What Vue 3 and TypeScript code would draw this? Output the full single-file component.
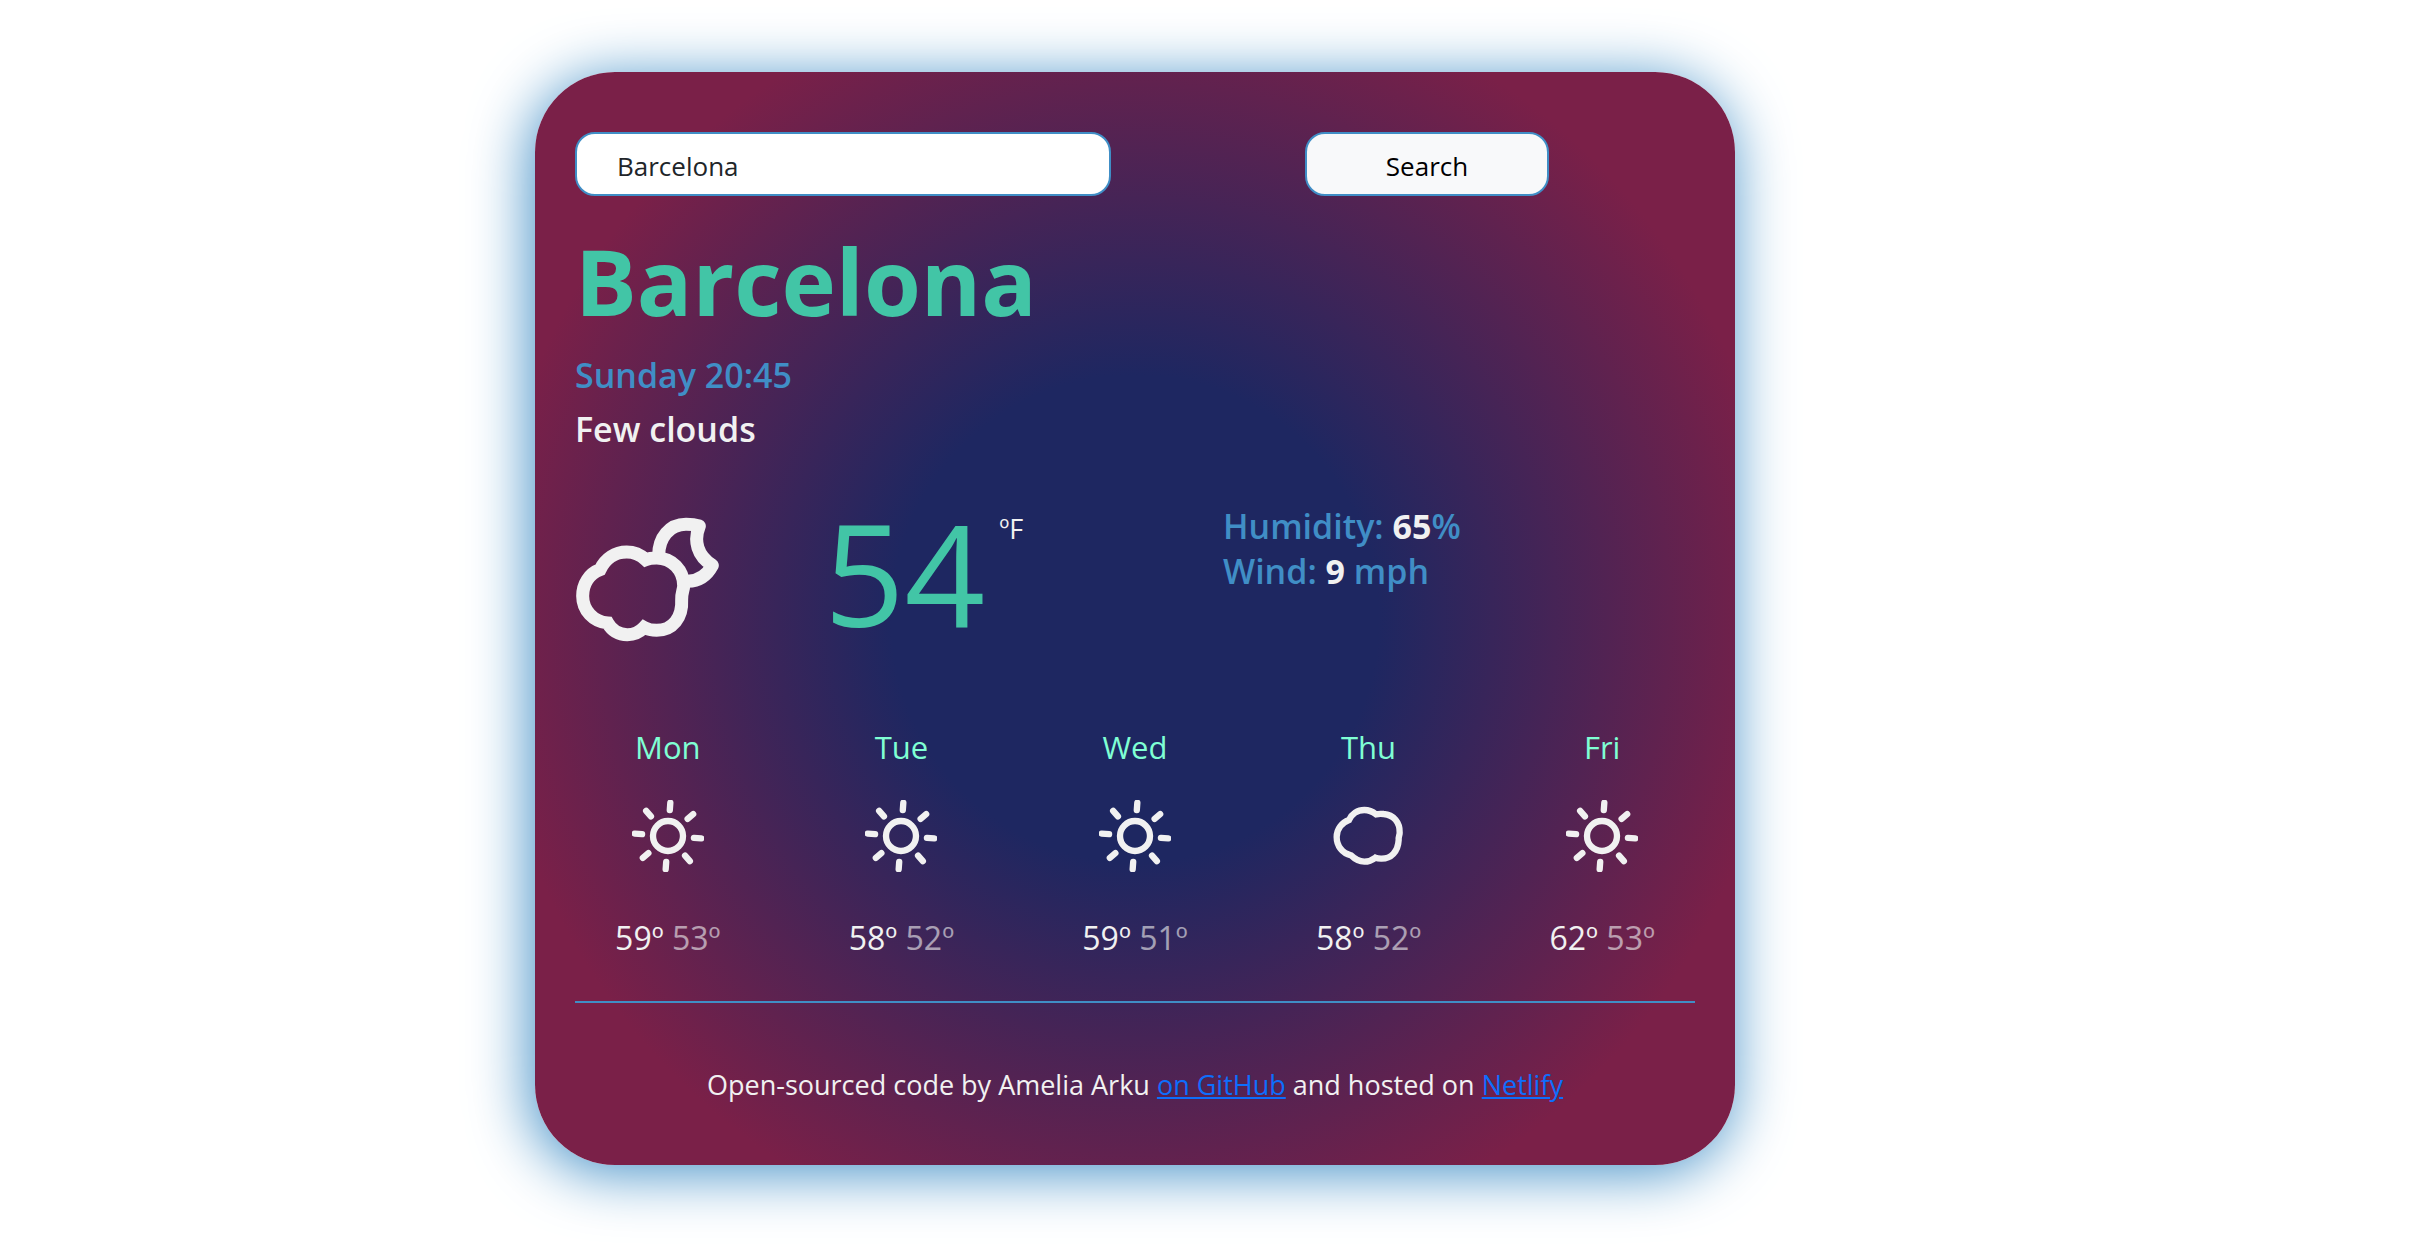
<script setup lang="ts">
import { ref } from 'vue'

interface Day {
  name: string
  icon: 'sun' | 'cloud'
  high: number
  low: number
}

const query = ref('Barcelona')
const city = ref('Barcelona')

const days: Day[] = [
  { name: 'Mon', icon: 'sun', high: 59, low: 53 },
  { name: 'Tue', icon: 'sun', high: 58, low: 52 },
  { name: 'Wed', icon: 'sun', high: 59, low: 51 },
  { name: 'Thu', icon: 'cloud', high: 58, low: 52 },
  { name: 'Fri', icon: 'sun', high: 62, low: 53 },
]

const rays = [0, 1, 2, 3, 4, 5, 6, 7].map((n) => 4 + n * 45)

function search() {
  const name = query.value.trim()
  if (name) city.value = name
}
</script>

<template>
  <main class="card">
    <form class="search" @submit.prevent="search">
      <input v-model="query" class="search-input" type="text" aria-label="City" />
      <button class="search-button" type="submit">Search</button>
    </form>

    <h1 class="city">{{ city }}</h1>
    <p class="summary when">Sunday 20:45</p>
    <p class="summary">Few clouds</p>

    <section class="current">
      <svg class="current-icon" viewBox="45 75 435 381" aria-hidden="true">
        <g fill="none" stroke="currentColor" stroke-width="39">
          <path stroke-linejoin="round" d="M296 194C296 140 328 100 378 100C393 100 405 101 418 105C400 150 412 195 457 223C440 255 415 270 383 271" />
          <path d="M120 236C136 202 166 183 200 183C222 183 242 192 257 206C267 202 278 201 290 201C336 201 371 238 371 284C371 296 364 306 365 326C368 380 338 418 290 418C276 418 263 415 252 409C238 424 220 431 202 431C178 431 156 419 143 396C100 392 68 358 68 315C68 278 88 248 120 236Z" />
        </g>
      </svg>
      <div class="temperature">
        <span class="degrees">54</span>
        <span class="unit">ºF</span>
      </div>
      <ul class="details">
        <li>Humidity: <strong>65</strong>%</li>
        <li>Wind: <strong>9</strong> mph</li>
      </ul>
    </section>

    <ul class="forecast">
      <li v-for="day in days" :key="day.name" class="day">
        <span class="day-name">{{ day.name }}</span>
        <svg v-if="day.icon === 'sun'" class="day-icon" viewBox="-108 -108 216 216" aria-hidden="true">
          <g fill="none" stroke="currentColor" stroke-width="19" stroke-linecap="round">
            <circle r="45" />
            <path v-for="angle in rays" :key="angle" d="M0 -100V-78" :transform="`rotate(${angle})`" />
          </g>
        </svg>
        <svg v-else class="day-icon" viewBox="818 270 216 216" aria-hidden="true">
          <path
            fill="none"
            stroke="currentColor"
            stroke-width="19"
            d="M866 330C874 312 892 300 912 300C924 300 936 304 947 313C955 311 962 311 970 312C1000 314 1019 338 1018 368C1018 376 1014 380 1015 390C1013 425 992 447 962 446C955 446 950 445 945 443C936 450 925 455 912 455C895 455 882 446 872 436C846 430 829 408 829 381C829 356 845 338 866 330Z"
          />
        </svg>
        <span class="day-range">{{ day.high }}º <span class="low">{{ day.low }}º</span></span>
      </li>
    </ul>

    <footer class="credits">
      Open-sourced code by Amelia Arku <a href="#github">on GitHub</a> and hosted on
      <a href="#netlify">Netlify</a>
    </footer>
  </main>
</template>

<style>
body {
  margin: 0;
  background: #fff;
}
</style>

<style scoped>
.card {
  box-sizing: border-box;
  max-width: 1200px;
  margin: 72px 24px 93px max(24px, calc(50% - 682px));
  padding: 60px 40px 59px;
  border-radius: 80px;
  background: radial-gradient(circle, #1e2761 30%, #7a2048 80%);
  box-shadow: -4px 7px 60px #408ec6;
  color: #f1f1f1;
  font-family: 'Segoe UI', 'Open Sans', 'Noto Sans', sans-serif;
  font-size: 27px;
  line-height: 42px;
}

.search {
  display: flex;
  gap: 48px;
}

.search-input,
.search-button {
  box-sizing: border-box;
  height: 64px;
  border: 2px solid #408ec6;
  border-radius: 20px;
  font: inherit;
  font-size: 26px;
}

.search-input {
  width: calc(50% - 24px);
  padding: 4px 40px 0;
  background: #fff;
  color: #212529;
}

.search-button {
  width: calc(25% - 36px);
  margin: 0 auto;
  padding: 4px 0 0;
  background: #f8f9fa;
  color: #000;
  cursor: pointer;
}

.city {
  margin: 29px 0 11px;
  color: #42c5a6;
  font-size: 92px;
  font-weight: 700;
  line-height: 112px;
}

.summary {
  margin: 0;
  font-size: 34px;
  font-weight: 600;
  line-height: 54px;
}

.when {
  color: #408ec6;
}

.current {
  display: grid;
  grid-template-columns: 249fr 399fr 472fr;
  align-items: start;
  margin-top: 48px;
}

.current-icon {
  width: 145px;
  height: 127px;
  margin-top: 12px;
}

.temperature {
  display: flex;
  gap: 14px;
}

.degrees {
  color: #42c5a6;
  font-size: 141px;
  line-height: 136px;
}

.unit {
  line-height: 50px;
}

.details,
.forecast {
  margin: 0;
  padding: 0;
  list-style: none;
}

.details {
  color: #408ec6;
  font-size: 34px;
  font-weight: 600;
  line-height: 45px;
}

.details strong {
  color: #f1f1f1;
  font-weight: 700;
}

.forecast {
  display: grid;
  grid-template-columns: repeat(5, 1fr);
  margin: 80px -24px 39px;
  font-size: 32px;
  line-height: 48px;
}

.day {
  display: flex;
  flex-direction: column;
  align-items: center;
}

.day-name {
  color: #7fffd4;
  font-size: 31px;
}

.day-icon {
  width: 72px;
  height: 72px;
  margin: 29px 0 42px;
}

.low {
  opacity: 0.6;
}

.credits {
  padding-top: 61px;
  border-top: 2px solid #408ec6;
  text-align: center;
}

.credits a {
  color: #0d6efd;
}
</style>
